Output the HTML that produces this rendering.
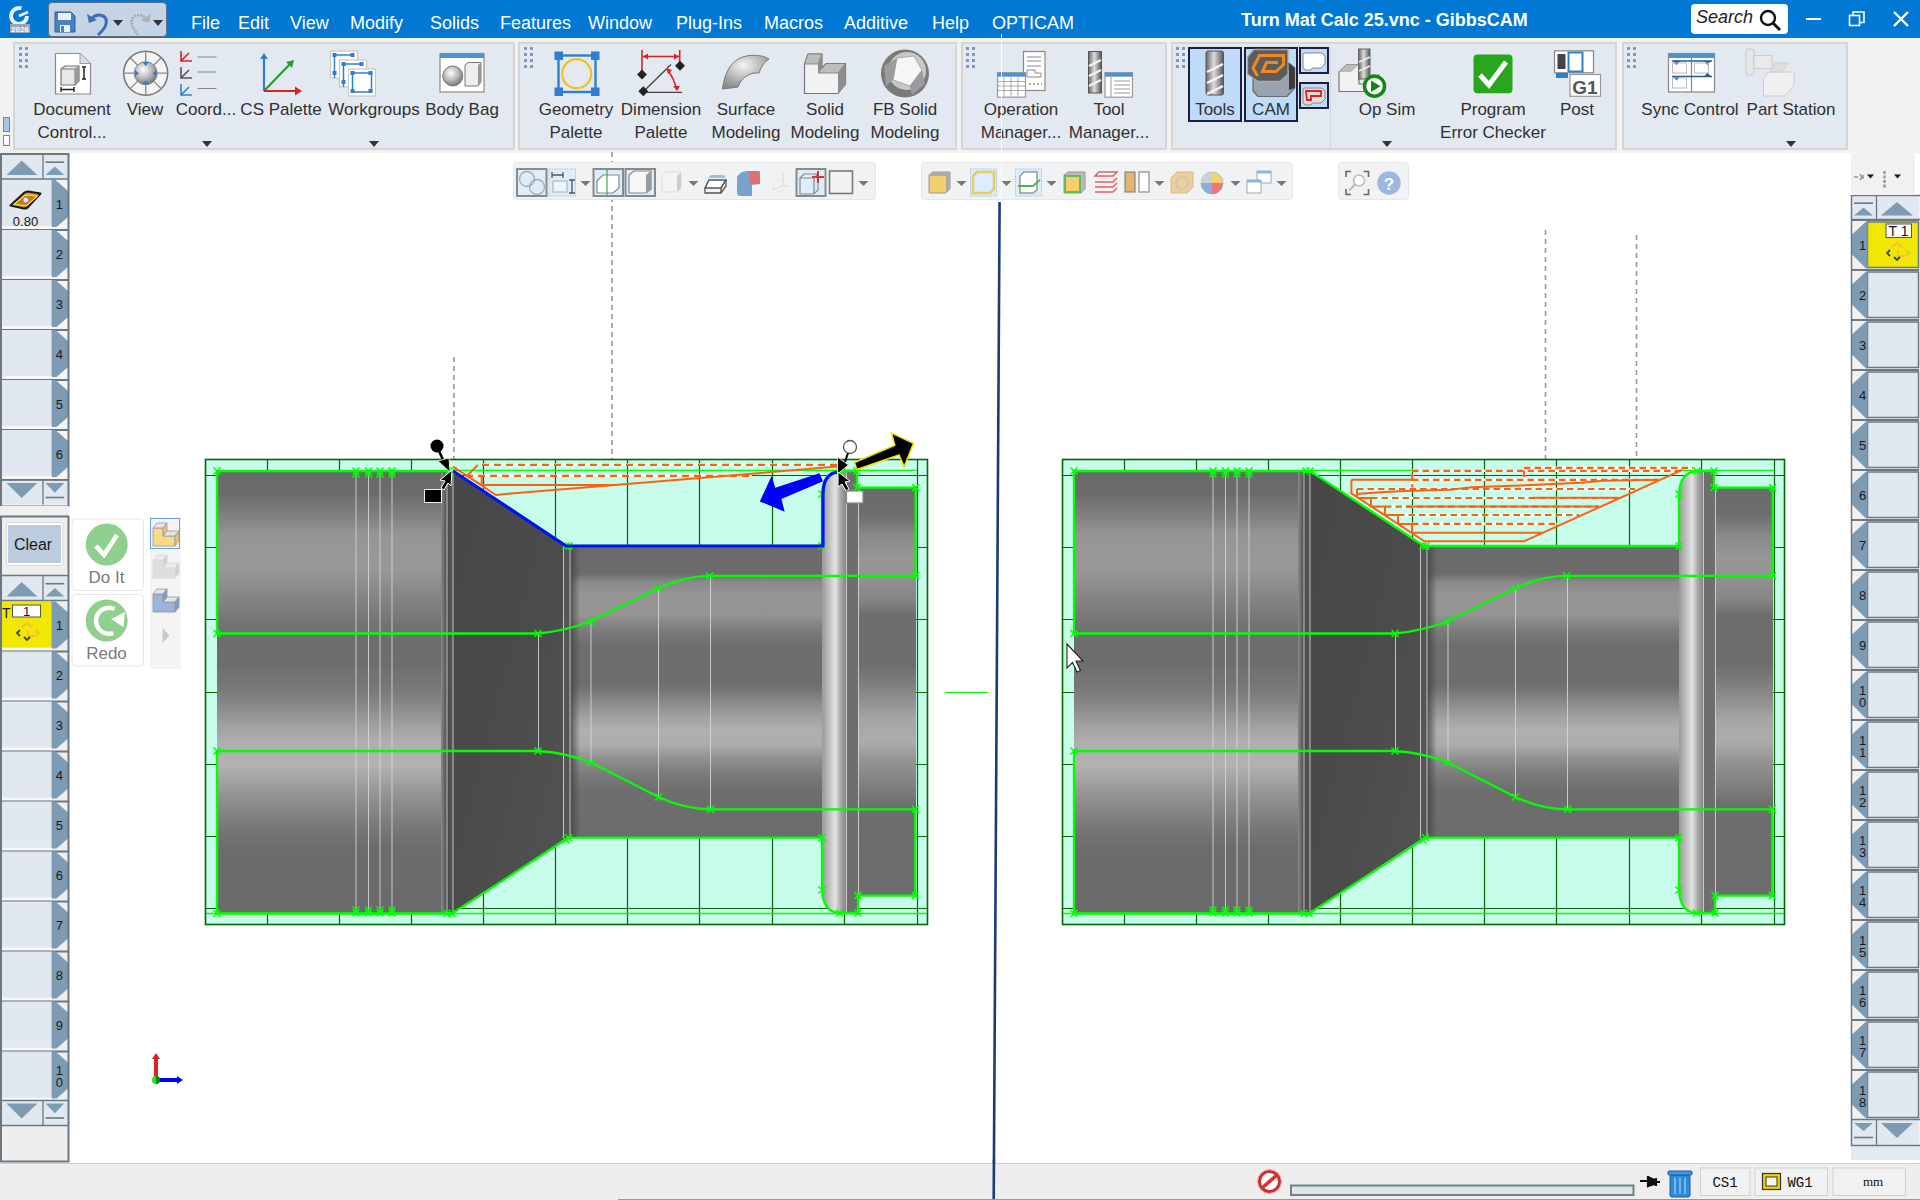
<!DOCTYPE html>
<html><head><meta charset="utf-8">
<style>
*{box-sizing:border-box;margin:0;padding:0}
html,body{width:1920px;height:1200px;overflow:hidden;background:#fff;font-family:"Liberation Sans",sans-serif;position:relative}
.a{position:absolute}
#menubar{left:0;top:0;width:1920px;height:38px;background:#0078d4}
.mi{position:absolute;top:12px;color:#fff;font-size:18px;line-height:22px;white-space:nowrap}
#tbstrip{left:0;top:38px;width:1920px;height:115px;background:#f2f2f3}
.pnl{position:absolute;top:42px;height:108px;background:#e3e9f1;border:2px solid #d5d5d8}
.lbl{position:absolute;font-size:17px;line-height:23px;color:#303030;text-align:center;white-space:nowrap}
.grip{position:absolute;width:3px;height:3px;background:#7f96c6;box-shadow:6px 0 #7f96c6,0 6px #7f96c6,6px 6px #7f96c6,0 12px #7f96c6,6px 12px #7f96c6,0 18px #7f96c6,6px 18px #7f96c6}
.dd{position:absolute;width:0;height:0;border-left:5px solid transparent;border-right:5px solid transparent;border-top:6px solid #333}
#status{left:0;top:1163px;width:1920px;height:37px;background:#efeeee;border-top:1px solid #cfcfcf}
</style></head><body>

<div id="menubar" class="a">
<svg class="a" style="left:6px;top:4px" width="28" height="30" viewBox="0 0 28 30">
<circle cx="13" cy="12" r="8" fill="none" stroke="#e8f2ff" stroke-width="4" stroke-dasharray="40 10"/>
<path d="M13 12 L22 8" stroke="#e8f2ff" stroke-width="3"/>
<rect x="4" y="20" width="20" height="9" fill="#9aa6b4"/>
<text x="14" y="28" font-size="8" font-weight="bold" fill="#fff" text-anchor="middle" font-family="Liberation Sans">2026</text>
</svg>
<div class="a" style="left:48px;top:2px;width:119px;height:35px;background:#c5d3e6;border:1.5px solid #5e6e84;border-radius:4px"></div>
<svg class="a" style="left:54px;top:11px" width="22" height="22" viewBox="0 0 22 22">
<path d="M1 1 H17 L21 5 V21 H1 Z" fill="#4a7fc0" stroke="#2f5f9f" stroke-width="1"/>
<rect x="4" y="2" width="13" height="7" fill="#e8f0fa"/>
<rect x="6" y="14" width="10" height="7" fill="#e8f0fa"/>
<rect x="7" y="15" width="3" height="6" fill="#4a7fc0"/>
</svg>
<svg class="a" style="left:86px;top:10px" width="26" height="26" viewBox="0 0 26 26">
<path d="M5 9 C12 2 22 5 20 14 C19 19 15 22 12 25" fill="none" stroke="#3d6fb0" stroke-width="3"/>
<path d="M1 4 L3 13 L11 10 Z" fill="#3d6fb0"/>
</svg>
<div class="dd" style="left:113px;top:20px;border-top-color:#333"></div>
<svg class="a" style="left:128px;top:10px" width="24" height="26" viewBox="0 0 24 26">
<path d="M19 9 C12 2 2 5 4 14 C5 19 8 22 10 25" fill="none" stroke="#a8a8a8" stroke-width="2.5" stroke-dasharray="2 1"/>
<path d="M23 4 L21 13 L13 10 Z" fill="#b0b0b0"/>
</svg>
<div class="dd" style="left:153px;top:20px;border-top-color:#333"></div>
<span class="mi" style="left:191px">File</span>
<span class="mi" style="left:238px">Edit</span>
<span class="mi" style="left:290px">View</span>
<span class="mi" style="left:350px">Modify</span>
<span class="mi" style="left:430px">Solids</span>
<span class="mi" style="left:500px">Features</span>
<span class="mi" style="left:588px">Window</span>
<span class="mi" style="left:676px">Plug-Ins</span>
<span class="mi" style="left:764px">Macros</span>
<span class="mi" style="left:844px">Additive</span>
<span class="mi" style="left:932px">Help</span>
<span class="mi" style="left:992px">OPTICAM</span>
<span class="mi" style="left:1241px;top:9px;font-weight:bold">Turn Mat Calc 25.vnc - GibbsCAM</span>
<div class="a" style="left:1691px;top:4px;width:97px;height:30px;background:#fff;border-radius:4px"></div>
<span class="a" style="left:1696px;top:7px;font-size:18px;font-style:italic;color:#222">Search</span>
<svg class="a" style="left:1758px;top:8px" width="24" height="24" viewBox="0 0 24 24"><circle cx="10" cy="10" r="7" fill="none" stroke="#111" stroke-width="2.4"/><path d="M15 15 L22 22" stroke="#111" stroke-width="3"/></svg>
<div class="a" style="left:1806px;top:18px;width:15px;height:2px;background:#fff"></div>
<svg class="a" style="left:1848px;top:10px" width="18" height="18" viewBox="0 0 18 18"><rect x="1.5" y="5.5" width="10" height="10" fill="none" stroke="#fff" stroke-width="1.6"/><path d="M5 5.5 V2 H16 V12.5 H11.5" fill="none" stroke="#fff" stroke-width="1.6"/></svg>
<svg class="a" style="left:1892px;top:10px" width="18" height="18" viewBox="0 0 18 18"><path d="M2 2 L16 16 M16 2 L2 16" stroke="#fff" stroke-width="2.4"/></svg>
</div>
<div id="tbstrip" class="a">
<div class="a" style="left:3px;top:79px;width:7px;height:15px;background:#a9c4e8;border:1px solid #5a8ad0"></div>
<div class="a" style="left:3px;top:97px;width:7px;height:11px;background:#fff;border:1px solid #5a8ad0"></div>
</div>
<div class="pnl" style="left:13px;width:502px"></div>
<div class="pnl" style="left:518px;width:439px"></div>
<div class="pnl" style="left:961px;width:206px"></div>
<div class="pnl" style="left:1171px;width:446px"></div>
<div class="pnl" style="left:1622px;width:226px"></div>
<div class="grip" style="left:19px;top:47px"></div>
<div class="grip" style="left:524px;top:47px"></div>
<div class="grip" style="left:966px;top:47px"></div>
<div class="grip" style="left:1176px;top:47px"></div>
<div class="grip" style="left:1627px;top:47px"></div>
<div class="a" style="left:1330px;top:47px;width:1px;height:101px;background:#d0d7df"></div>
<!-- labels -->
<div class="lbl" style="left:22px;top:98px;width:100px">Document<br>Control...</div>
<div class="lbl" style="left:120px;top:98px;width:50px">View</div>
<div class="lbl" style="left:171px;top:98px;width:70px">Coord...</div>
<div class="lbl" style="left:236px;top:98px;width:90px">CS Palette</div>
<div class="lbl" style="left:324px;top:98px;width:100px">Workgroups</div>
<div class="lbl" style="left:417px;top:98px;width:90px">Body Bag</div>
<div class="lbl" style="left:531px;top:98px;width:90px">Geometry<br>Palette</div>
<div class="lbl" style="left:616px;top:98px;width:90px">Dimension<br>Palette</div>
<div class="lbl" style="left:701px;top:98px;width:90px">Surface<br>Modeling</div>
<div class="lbl" style="left:780px;top:98px;width:90px">Solid<br>Modeling</div>
<div class="lbl" style="left:859px;top:98px;width:92px">FB Solid<br>Modeling</div>
<div class="lbl" style="left:971px;top:98px;width:100px">Operation<br>Manager...</div>
<div class="lbl" style="left:1059px;top:98px;width:100px">Tool<br>Manager...</div>
<div class="a" style="left:1188px;top:47px;width:54px;height:75px;background:#c0dbf8;border:2px solid #1c1f44"></div>
<div class="a" style="left:1244px;top:47px;width:54px;height:75px;background:#c0dbf8;border:2px solid #1c1f44"></div>
<div class="a" style="left:1299px;top:47px;width:30px;height:27px;background:#c0dbf8;border:2px solid #1c1f44"></div>
<div class="a" style="left:1299px;top:82px;width:30px;height:27px;background:#c0dbf8;border:2px solid #1c1f44"></div>
<div class="lbl" style="left:1180px;top:98px;width:70px">Tools</div>
<div class="lbl" style="left:1236px;top:98px;width:70px">CAM</div>
<div class="lbl" style="left:1342px;top:98px;width:90px">Op Sim</div>
<div class="lbl" style="left:1437px;top:98px;width:112px">Program<br>Error Checker</div>
<div class="lbl" style="left:1547px;top:98px;width:60px">Post</div>
<div class="lbl" style="left:1635px;top:98px;width:110px">Sync Control</div>
<div class="lbl" style="left:1741px;top:98px;width:100px">Part Station</div>
<div class="dd" style="left:202px;top:141px"></div>
<div class="dd" style="left:369px;top:141px"></div>
<div class="dd" style="left:1382px;top:141px"></div>
<div class="dd" style="left:1786px;top:141px"></div>
<svg class="a" style="left:0;top:0" width="1920" height="160" viewBox="0 0 1920 160">
<defs>
<radialGradient id="gsph" cx="40%" cy="35%" r="65%"><stop offset="0" stop-color="#fff"/><stop offset="0.6" stop-color="#b5b5b5"/><stop offset="1" stop-color="#777"/></radialGradient>
<linearGradient id="gmill" x1="0" x2="1"><stop offset="0" stop-color="#666"/><stop offset="0.45" stop-color="#ddd"/><stop offset="1" stop-color="#555"/></linearGradient>
<radialGradient id="gsurf" cx="45%" cy="30%" r="70%"><stop offset="0" stop-color="#f4f4f4"/><stop offset="1" stop-color="#8a8a8a"/></radialGradient>
</defs>
<!-- Document Control -->
<path d="M55.5 53.5 H80 L90.5 63.5 V94 H55.5 Z" fill="#fff" stroke="#8a8a8a" stroke-width="1.2"/>
<path d="M80 53.5 V63.5 H90.5" fill="#e0e0e0" stroke="#9a9a9a" stroke-width="1"/>
<path d="M61 69 L65 66 H79 V81 L75 85 H61 Z" fill="#e8e8e8" stroke="#777" stroke-width="1.2"/>
<path d="M75 69 V85 M61 69 H75 L79 66" fill="none" stroke="#777" stroke-width="1"/>
<path d="M75 69 L79 66 V81 L75 85 Z" fill="#9a9a9a"/>
<path d="M84 67 V79 M82 67 H86 M82 79 H86" stroke="#222" stroke-width="1.5"/>
<path d="M61 89.5 H74 M61 87 V92 M74 87 V92" stroke="#222" stroke-width="1.4"/>
<!-- View -->
<circle cx="145.7" cy="73.2" r="22" fill="#f4f4f4" stroke="#777" stroke-width="1.5"/>
<path d="M145.7 51 V95.4 M123.5 73.2 H167.9 M130 57.5 L161.4 88.9 M161.4 57.5 L130 88.9" stroke="#888" stroke-width="1.3"/>
<circle cx="145.7" cy="73.2" r="11.5" fill="url(#gsph)" stroke="#888" stroke-width="1"/>
<path d="M142.5 62 H149 L145.7 66 Z M142.5 84.5 H149 L145.7 80.5 Z M135 70 V76.5 L139 73.2 Z M156.5 70 V76.5 L152.5 73.2 Z" fill="#2f7fd0"/>
<!-- Coord -->
<g stroke-width="1.6" fill="none">
<path d="M181 51 V61 H192 M181 61 L189 53" stroke="#dd2222"/>
<path d="M181 67 V78 H192 M181 78 L189 70" stroke="#555"/>
<path d="M181 84 V95 H192 M181 95 L189 87" stroke="#2f7fd0"/>
</g>
<path d="M197.5 57 H216.5 M197.5 72 H216.5 M197.5 88.5 H216.5" stroke="#888" stroke-width="1.2"/>
<!-- CS Palette -->
<path d="M264 91 V57" stroke="#2f7fd0" stroke-width="2.2"/><path d="M260 59 L264 53 L268 59 Z" fill="#2f7fd0"/>
<path d="M264 91 L291 63" stroke="#22a022" stroke-width="2.2"/><path d="M286 62 L294 60 L292 68 Z" fill="#22a022"/>
<path d="M264 91 H297" stroke="#dd2222" stroke-width="2.2"/><path d="M295 86.5 L302 91 L295 95.5 Z" fill="#dd2222"/>
<!-- Workgroups -->
<g fill="#fff" stroke="#c8c8c8" stroke-width="1.2">
<rect x="330.5" y="51" width="27" height="27"/><rect x="339.5" y="60" width="27" height="27"/><rect x="348.5" y="69" width="27" height="27"/>
</g>
<g fill="none" stroke="#2f7fd0" stroke-width="1.5">
<path d="M334.5 78 V55 H352.5"/><path d="M343.5 87 V64 H361.5"/><rect x="352.5" y="73" width="19" height="19"/>
</g>
<g fill="#2f7fd0">
<rect x="332.5" y="53" width="4" height="4"/><rect x="350.5" y="53" width="4" height="4"/><rect x="332.5" y="71" width="4" height="4"/>
<rect x="341.5" y="62" width="4" height="4"/><rect x="359.5" y="62" width="4" height="4"/><rect x="341.5" y="80" width="4" height="4"/>
<rect x="350.5" y="71" width="4" height="4"/><rect x="368.5" y="71" width="4" height="4"/><rect x="350.5" y="89" width="4" height="4"/><rect x="368.5" y="89" width="4" height="4"/>
</g>
<!-- Body Bag -->
<rect x="440" y="53.5" width="44" height="38.5" fill="#fff" stroke="#8a8a8a" stroke-width="1.2"/>
<rect x="440" y="53.5" width="44" height="4.5" fill="#4f92d0"/>
<circle cx="452.8" cy="76" r="10" fill="url(#gsph)" stroke="#777" stroke-width="1"/>
<path d="M465 65 L468 62.5 H481 V82 L478 86 H465 Z" fill="#eee" stroke="#777" stroke-width="1"/>
<path d="M478 65 L481 62.5 V82 L478 86 Z" fill="#999"/>
<!-- Geometry Palette -->
<rect x="558.5" y="55.5" width="37" height="36.5" fill="none" stroke="#2f7fd0" stroke-width="2.4"/>
<rect x="554.5" y="51.5" width="8.5" height="8.5" fill="#2f7fd0"/><rect x="591" y="51.5" width="8.5" height="8.5" fill="#2f7fd0"/>
<rect x="554.5" y="87.5" width="8.5" height="8.5" fill="#2f7fd0"/><rect x="591" y="87.5" width="8.5" height="8.5" fill="#2f7fd0"/>
<circle cx="576.7" cy="73.7" r="14.5" fill="none" stroke="#f0c020" stroke-width="2.2"/>
<!-- Dimension Palette -->
<path d="M642 50 V71 M679.7 50 V62 M643 56.5 H679" stroke="#dd2222" stroke-width="1.6"/>
<path d="M643 56.5 L648 53.5 V59.5 Z M679 56.5 L674 53.5 V59.5 Z" fill="#dd2222"/>
<path d="M644 91 L671 64.5 M643 92.3 H682" stroke="#444" stroke-width="1.3"/>
<path d="M668.5 71 Q674 79 676.7 89" fill="none" stroke="#dd2222" stroke-width="1.4"/>
<path d="M666 68 L672 70 L668 74 Z M673 86 L680 86 L677 91 Z" fill="#dd2222"/>
<g fill="#222"><rect x="638.5" y="71" width="7" height="7" transform="rotate(45 642 74.5)"/><rect x="676.5" y="62.2" width="7" height="7" transform="rotate(45 680 65.7)"/><rect x="639.8" y="87.7" width="7" height="7" transform="rotate(45 643.3 91.2)"/></g>
<!-- Surface -->
<path d="M722.5 89 C725 70 733 57 750 55.5 C758 55 765 56 769 59 C764 62 761 67 759 73 C752 72 742 76 738 87 Z" fill="url(#gsurf)" stroke="#777" stroke-width="1"/>
<!-- Solid -->
<path d="M804.5 64 L808 54 H822 V68 L826 63.5 H845.5 V84 L838 93.5 H804.5 Z" fill="#f2f2f2" stroke="#777" stroke-width="1.2"/>
<path d="M808 54 H822 L818 64 H804.5 Z M826 63.5 H845.5 L838 73 H818 Z" fill="#bdbdbd" stroke="#777" stroke-width="0.8"/>
<path d="M822 54 V68 L818 73 V64 Z M845.5 63.5 V84 L838 93.5 V73 Z" fill="#8e8e8e"/>
<!-- FB Solid -->
<circle cx="905" cy="73.5" r="24" fill="#7a7a7a"/>
<circle cx="907" cy="71" r="19" fill="#c8c8c8"/>
<path d="M897 58 L914 56 L922 70 L910 86 L893 80 Z" fill="#f6f6f6" stroke="#999" stroke-width="0.8"/>
<path d="M884 66 L897 58 L893 80 L886 86 Z M910 86 L922 70 L925 84 L912 95 Z" fill="#9c9c9c"/>
<!-- Operation Manager -->
<rect x="1023.5" y="51.5" width="21.5" height="39" fill="#fff" stroke="#8a8a8a" stroke-width="1.2"/>
<path d="M1027 57 H1041 M1027 61 H1041 M1027 66 H1041" stroke="#888" stroke-width="1"/>
<path d="M1027 70 H1035 V73 H1041 V77 H1027 Z" fill="none" stroke="#888" stroke-width="1"/>
<path d="M1029 84 H1042" stroke="#888" stroke-width="1.5" stroke-dasharray="2 2"/>
<rect x="997.5" y="72.7" width="28" height="24.5" fill="#fff" stroke="#999" stroke-width="1.2"/>
<rect x="997.5" y="72.7" width="28" height="4" fill="#4f92d0"/>
<path d="M997.5 81.5 H1025.5 M997.5 86 H1025.5 M997.5 90.5 H1025.5 M1004 77 V97 M1011 77 V97 M1018 77 V97" stroke="#aaa" stroke-width="1"/>
<!-- Tool Manager -->
<rect x="1088.5" y="51.5" width="13" height="41.5" fill="url(#gmill)" stroke="#555" stroke-width="1"/>
<path d="M1089 66 L1101 60 M1089 76 L1101 70 M1089 86 L1101 80" stroke="#f4f4f4" stroke-width="2"/>
<rect x="1105" y="72.7" width="27.5" height="24.5" fill="#fff" stroke="#999" stroke-width="1.2"/>
<rect x="1105" y="72.7" width="27.5" height="4" fill="#4f92d0"/>
<path d="M1111 77 V97 M1114 81 H1130 M1114 85 H1130 M1114 89 H1130 M1114 93 H1130" stroke="#999" stroke-width="1"/>
<!-- Tools -->
<rect x="1206" y="51" width="17.5" height="44" rx="2" fill="url(#gmill)" stroke="#555" stroke-width="1"/>
<path d="M1207 72 L1223 64 M1207 83 L1223 75 M1207 94 L1223 86" stroke="#f4f4f4" stroke-width="2.5"/>
<!-- CAM -->
<path d="M1258 96.5 L1253 91 V71 L1262 63 H1289 L1294.7 68 V88 L1287 96.5 Z" fill="#98a4b0" stroke="#6a6a6a" stroke-width="1.2"/>
<path d="M1262 63 H1289 L1294.7 68 V88 L1289 90 V70 Z" fill="#3a3a3a"/>
<path d="M1254 49.5 H1288 V74 L1280 81.5 H1258 L1247.5 74 V57 Z" fill="#5c5c5c" stroke="#a8a8a8" stroke-width="1.3"/>
<path d="M1257.5 76 L1253 68 L1259.5 55.5 H1283.5 V64.5 L1276 71.5 H1262.5 L1266.5 62.5 H1278" fill="none" stroke="#f08a20" stroke-width="3"/>
<!-- small buttons -->
<path d="M1304 53 H1322 L1325 56 V64 L1321 68 H1313 L1310 70 H1305 L1303 67 V55 Z" fill="#fff" stroke="#888" stroke-width="1"/>
<path d="M1304 88 H1322 L1325 91 V99 L1321 103 H1313 L1310 105 H1305 L1303 102 V90 Z" fill="#ddd" stroke="#888" stroke-width="1"/>
<path d="M1306 91 H1321 V96 H1311 V100 H1307 Z" fill="none" stroke="#e02020" stroke-width="1.8"/>
<!-- Op Sim -->
<path d="M1339 91.5 V72 L1347 64.5 H1359 V84 H1380 V91.5 Z" fill="#f2f2f2" stroke="#777" stroke-width="1.2"/>
<path d="M1339 72 L1347 64.5 H1359 L1351 72 Z M1370 74 H1380 V84 H1370 Z" fill="#bbb"/>
<rect x="1358.5" y="49" width="11.5" height="30" fill="url(#gmill)" stroke="#666" stroke-width="1"/>
<path d="M1359 62 L1370 57 M1359 71 L1370 66" stroke="#eee" stroke-width="1.8"/>
<circle cx="1374.5" cy="86.2" r="10" fill="#fff" stroke="#118811" stroke-width="3.5"/>
<path d="M1371 80.5 L1380.5 86.2 L1371 92 Z" fill="#118811"/>
<!-- Program Error Checker -->
<rect x="1473.5" y="54.5" width="39" height="38.7" rx="4" fill="#2aa61e"/>
<path d="M1480 75 L1489 85 L1506 62" fill="none" stroke="#fff" stroke-width="5"/>
<!-- Post -->
<rect x="1554.5" y="50.8" width="39" height="22" fill="#fff" stroke="#888" stroke-width="1.2"/>
<rect x="1557.5" y="54" width="8" height="15" fill="#444"/>
<rect x="1568.5" y="52.5" width="14" height="19" fill="#fff" stroke="#2f7fd0" stroke-width="2"/>
<rect x="1556" y="73" width="12" height="5" fill="#2f7fd0"/>
<rect x="1570" y="74.5" width="30.5" height="21.8" fill="#fff" stroke="#999" stroke-width="1.2"/>
<text x="1585" y="93.5" font-family="Liberation Sans" font-weight="bold" font-size="19" fill="#555" text-anchor="middle">G1</text>
<!-- Sync Control -->
<rect x="1668.5" y="53.5" width="46" height="38.5" fill="#fff" stroke="#888" stroke-width="1.2"/>
<rect x="1668.5" y="53.5" width="46" height="4.5" fill="#4f92d0"/>
<path d="M1691.5 58 V92" stroke="#888" stroke-width="1.2"/>
<path d="M1672 61 H1712 M1672 76.5 H1712" stroke="#2a5a9a" stroke-width="1.6"/>
<path d="M1673 61 H1680 L1676.5 65 Z M1704 61 H1711 L1707.5 65 Z M1673 76.5 H1680 L1676.5 80.5 Z M1704 76.5 H1711 L1707.5 72.5 Z" fill="#2a5a9a"/>
<rect x="1672.5" y="63" width="14" height="10" fill="none" stroke="#bbb" stroke-width="1"/>
<rect x="1672.5" y="78" width="14" height="10" fill="none" stroke="#bbb" stroke-width="1"/>
<rect x="1694.5" y="63" width="14" height="10" fill="none" stroke="#bbb" stroke-width="1"/>
<!-- Part Station -->
<rect x="1746" y="49" width="8" height="26" rx="2" fill="#e6e6e6" stroke="#c8c8c8" stroke-width="1"/>
<rect x="1754" y="55.5" width="18" height="13" fill="#eaeaea" stroke="#ccc" stroke-width="1"/>
<path d="M1763.5 96 V78 L1769 72 H1794 V85 L1785 96 Z" fill="#f0f0f0" stroke="#ccc" stroke-width="1"/>
<path d="M1769 72 L1775 63 H1788 L1782 72 Z" fill="#ddd" stroke="#ccc" stroke-width="0.8"/>
</svg>


<!--VIEW-->
<svg class="a" style="left:0;top:0" width="1920" height="1200" viewBox="0 0 1920 1200">
<defs>

<linearGradient id="cylA" gradientUnits="userSpaceOnUse" x1="0" y1="471" x2="0" y2="913">
<stop offset="0.000" stop-color="#686868"/><stop offset="0.052" stop-color="#6c6c6c"/><stop offset="0.100" stop-color="#808080"/><stop offset="0.145" stop-color="#979595"/><stop offset="0.224" stop-color="#999797"/><stop offset="0.281" stop-color="#868686"/><stop offset="0.348" stop-color="#737373"/><stop offset="0.394" stop-color="#6c6c6c"/><stop offset="0.439" stop-color="#6e6e6e"/><stop offset="0.495" stop-color="#797979"/><stop offset="0.541" stop-color="#8e8e8e"/><stop offset="0.581" stop-color="#a2a2a2"/><stop offset="0.620" stop-color="#b0b0b0"/><stop offset="0.665" stop-color="#b2b2b2"/><stop offset="0.713" stop-color="#9c9c9c"/><stop offset="0.756" stop-color="#8a8a8a"/><stop offset="0.812" stop-color="#767676"/><stop offset="0.857" stop-color="#6c6c6c"/><stop offset="1.000" stop-color="#6a6a6a"/>
</linearGradient>
<linearGradient id="cylB" gradientUnits="userSpaceOnUse" x1="0" y1="546" x2="0" y2="838">
<stop offset="0.000" stop-color="#6a6a6a"/><stop offset="0.096" stop-color="#6c6c6c"/><stop offset="0.123" stop-color="#8a8a8a"/><stop offset="0.168" stop-color="#979595"/><stop offset="0.236" stop-color="#959393"/><stop offset="0.288" stop-color="#7c7c7c"/><stop offset="0.339" stop-color="#6e6e6e"/><stop offset="0.476" stop-color="#6e6e6e"/><stop offset="0.527" stop-color="#868686"/><stop offset="0.589" stop-color="#a2a2a2"/><stop offset="0.630" stop-color="#b0b0b0"/><stop offset="0.682" stop-color="#acacac"/><stop offset="0.733" stop-color="#8e8e8e"/><stop offset="0.784" stop-color="#7a7a7a"/><stop offset="0.836" stop-color="#6e6e6e"/><stop offset="1.000" stop-color="#6c6c6c"/>
</linearGradient>
<linearGradient id="cylC" gradientUnits="userSpaceOnUse" x1="0" y1="488" x2="0" y2="896">
<stop offset="0.000" stop-color="#6a6a6a"/><stop offset="0.066" stop-color="#6e6e6e"/><stop offset="0.115" stop-color="#888888"/><stop offset="0.176" stop-color="#979797"/><stop offset="0.213" stop-color="#939393"/><stop offset="0.275" stop-color="#848484"/><stop offset="0.311" stop-color="#6e6e6e"/><stop offset="0.434" stop-color="#6e6e6e"/><stop offset="0.495" stop-color="#848484"/><stop offset="0.564" stop-color="#a4a4a4"/><stop offset="0.618" stop-color="#adadad"/><stop offset="0.667" stop-color="#949494"/><stop offset="0.735" stop-color="#7e7e7e"/><stop offset="0.777" stop-color="#6e6e6e"/><stop offset="1.000" stop-color="#6c6c6c"/>
</linearGradient>
<linearGradient id="cone" x1="0" y1="0" x2="1" y2="1">
<stop offset="0" stop-color="#474747"/><stop offset="0.5" stop-color="#4b4b4b"/><stop offset="1" stop-color="#535353"/>
</linearGradient>
<linearGradient id="coneEdge" x1="0" y1="0" x2="1" y2="0">
<stop offset="0" stop-color="#8a8a8a"/><stop offset="0.5" stop-color="#4a4a4a"/><stop offset="1" stop-color="#555"/>
</linearGradient>
<linearGradient id="midEdge" x1="0" y1="0" x2="1" y2="0">
<stop offset="0" stop-color="#404040" stop-opacity="0.8"/><stop offset="1" stop-color="#404040" stop-opacity="0"/>
</linearGradient>
<linearGradient id="ring" x1="0" y1="0" x2="1" y2="0">
<stop offset="0" stop-color="#9a9a9a"/><stop offset="0.3" stop-color="#c0c0c0"/><stop offset="0.55" stop-color="#e4e4e4"/><stop offset="0.78" stop-color="#a8a8a8"/><stop offset="1" stop-color="#858585"/>
</linearGradient>

</defs>
<path d="M453.9 357 V471 M612 152 V471 M1545.5 230 V460 M1636.5 235 V460" stroke="#9a9a9a" stroke-width="1.6" stroke-dasharray="5 4"/>
<rect x="205.5" y="459.5" width="722" height="465" fill="#c8fdec" stroke="#006800" stroke-width="1.6"/>
<path d="M267.5 460 V924 M339.5 460 V924 M411.5 460 V924 M483.5 460 V924 M555.5 460 V924 M627.5 460 V924 M699.5 460 V924 M772.5 460 V924 M844.5 460 V924 M206 475.5 H927 M206 547.5 H927 M206 619.5 H927 M206 692.5 H927 M206 764.5 H927 M206 836.5 H927 M206 908.5 H927 M917.5 460 V924" stroke="#006800" stroke-width="1.2" fill="none"/>
<rect x="217" y="471" width="230" height="442" fill="url(#cylA)"/>
<path d="M441 471 H453 V913 H441 Z" fill="url(#coneEdge)"/>
<path d="M453 471 L566 546 V838 L453 913 Z" fill="url(#cone)"/>
<rect x="570" y="546" width="252" height="292" fill="url(#cylB)"/>
<rect x="563.5" y="546" width="6.5" height="292" fill="#555"/>
<rect x="570" y="546" width="10" height="292" fill="url(#midEdge)"/>
<path d="M822 494 Q823 472 840 471 H846 V913 H840 Q823 912 822 890 Z" fill="url(#ring)"/>
<rect x="846" y="471" width="12" height="442" fill="#6e6e6e"/>
<rect x="858" y="488" width="58" height="408" fill="url(#cylC)"/>
<path d="M356 474 V911 M368.5 474 V911 M380 474 V911 M392 474 V911 M447 471 V913 M453 471 V913 M538.5 633.5 V751 M563.5 546 V838 M570 546 V838 M591 621.5 V762.5 M658.5 588.5 V797 M710.5 576 V809.3 M846.5 471 V913 M858.5 488 V896" stroke="#d8d8d8" stroke-width="1" fill="none" opacity="0.85"/>
<path d="M217 633.5 V471 H453 L567 546 H822 V494 Q823 472 840 471 H857 V487.6 H915.7 V575.8 H709.5 Q684 576 658 588.5 L590 621.5 Q565 631 538 633.5 Z M217 751 H538 Q565 752.5 591 762.5 L658.5 797 Q684 809 710.5 809.3 H915.3 V895.6 H858 V913 H839.5 Q823 912 822 890 V837.7 H568.5 L452 913.5 H217 Z" stroke="#00ff00" stroke-width="2.3" fill="none" stroke-linejoin="round"/>
<path d="M453 470.3 H917" stroke="#00ff00" stroke-width="1.3"/>
<path d="M206 913.5 H927" stroke="#00ff00" stroke-width="1.3"/>
<path d="M213.5 467.5 L220.5 474.5 M220.5 467.5 L213.5 474.5 M213.5 630.0 L220.5 637.0 M220.5 630.0 L213.5 637.0 M213.5 747.5 L220.5 754.5 M220.5 747.5 L213.5 754.5 M213.5 910.0 L220.5 917.0 M220.5 910.0 L213.5 917.0 M352.5 467.5 L359.5 474.5 M359.5 467.5 L352.5 474.5 M365.0 467.5 L372.0 474.5 M372.0 467.5 L365.0 474.5 M376.5 467.5 L383.5 474.5 M383.5 467.5 L376.5 474.5 M388.5 467.5 L395.5 474.5 M395.5 467.5 L388.5 474.5 M352.5 470.5 L359.5 477.5 M359.5 470.5 L352.5 477.5 M365.0 470.5 L372.0 477.5 M372.0 470.5 L365.0 477.5 M376.5 470.5 L383.5 477.5 M383.5 470.5 L376.5 477.5 M388.5 470.5 L395.5 477.5 M395.5 470.5 L388.5 477.5 M445.5 467.5 L452.5 474.5 M452.5 467.5 L445.5 474.5 M449.5 467.5 L456.5 474.5 M456.5 467.5 L449.5 474.5 M562.5 542.5 L569.5 549.5 M569.5 542.5 L562.5 549.5 M565.5 542.5 L572.5 549.5 M572.5 542.5 L565.5 549.5 M818.5 542.5 L825.5 549.5 M825.5 542.5 L818.5 549.5 M818.5 490.5 L825.5 497.5 M825.5 490.5 L818.5 497.5 M836.5 467.5 L843.5 474.5 M843.5 467.5 L836.5 474.5 M853.5 467.5 L860.5 474.5 M860.5 467.5 L853.5 474.5 M853.5 484.1 L860.5 491.1 M860.5 484.1 L853.5 491.1 M912.2 484.1 L919.2 491.1 M919.2 484.1 L912.2 491.1 M912.2 572.3 L919.2 579.3 M919.2 572.3 L912.2 579.3 M706.0 572.5 L713.0 579.5 M713.0 572.5 L706.0 579.5 M654.5 585.0 L661.5 592.0 M661.5 585.0 L654.5 592.0 M586.5 618.0 L593.5 625.0 M593.5 618.0 L586.5 625.0 M534.5 630.0 L541.5 637.0 M541.5 630.0 L534.5 637.0 M534.5 747.5 L541.5 754.5 M541.5 747.5 L534.5 754.5 M587.5 759.0 L594.5 766.0 M594.5 759.0 L587.5 766.0 M655.0 793.5 L662.0 800.5 M662.0 793.5 L655.0 800.5 M707.0 805.8 L714.0 812.8 M714.0 805.8 L707.0 812.8 M911.8 805.8 L918.8 812.8 M918.8 805.8 L911.8 812.8 M911.8 892.1 L918.8 899.1 M918.8 892.1 L911.8 899.1 M854.5 892.1 L861.5 899.1 M861.5 892.1 L854.5 899.1 M854.5 909.5 L861.5 916.5 M861.5 909.5 L854.5 916.5 M836.0 909.5 L843.0 916.5 M843.0 909.5 L836.0 916.5 M818.5 886.5 L825.5 893.5 M825.5 886.5 L818.5 893.5 M818.5 834.2 L825.5 841.2 M825.5 834.2 L818.5 841.2 M565.0 834.2 L572.0 841.2 M572.0 834.2 L565.0 841.2 M562.5 836.5 L569.5 843.5 M569.5 836.5 L562.5 843.5 M448.5 910.0 L455.5 917.0 M455.5 910.0 L448.5 917.0 M443.5 910.0 L450.5 917.0 M450.5 910.0 L443.5 917.0 M352.5 909.5 L359.5 916.5 M359.5 909.5 L352.5 916.5 M365.0 909.5 L372.0 916.5 M372.0 909.5 L365.0 916.5 M376.5 909.5 L383.5 916.5 M383.5 909.5 L376.5 916.5 M388.5 909.5 L395.5 916.5 M395.5 909.5 L388.5 916.5 M352.5 906.5 L359.5 913.5 M359.5 906.5 L352.5 913.5 M365.0 906.5 L372.0 913.5 M372.0 906.5 L365.0 913.5 M376.5 906.5 L383.5 913.5 M383.5 906.5 L376.5 913.5 M388.5 906.5 L395.5 913.5 M395.5 906.5 L388.5 913.5" stroke="#00ff00" stroke-width="1.5"/>
<path d="M482 464.8 H838 M466 475.8 H752" stroke="#fff" stroke-width="2.6"/>
<path d="M482 464.8 H838" stroke="#ff6010" stroke-width="2.2" stroke-dasharray="7 5"/>
<path d="M466 475.8 H752" stroke="#ff6010" stroke-width="2.2" stroke-dasharray="7 5"/>
<path d="M453 466.6 L496 495 L508 493.7 L837.6 466.6 M477.7 465 L467 476 L481.7 485 H618 M481.7 476 V485" stroke="#ff6010" stroke-width="2" fill="none"/>
<path d="M453 471 L566 546 H823 V494.6 Q823 474 837.6 472" stroke="#0010ff" stroke-width="3.2" fill="none" stroke-linejoin="round"/>
<circle cx="437" cy="446" r="6.5" fill="#000"/>
<path d="M439 451 L444 462" stroke="#000" stroke-width="2.5"/>
<path d="M438 461 L450 472 L449 458 Z" fill="#000" stroke="#fff" stroke-width="0.8"/>
<path d="M452 470 L440 480 L445 481 L441 488 L444 490 L448 483 L451 486 Z" fill="#000" stroke="#fff" stroke-width="1"/>
<rect x="424.5" y="489.5" width="17" height="13" fill="#000" stroke="#eee" stroke-width="1"/>
<circle cx="850" cy="447" r="6.5" fill="#fff" stroke="#555" stroke-width="1.3"/>
<path d="M848 453 L845 462" stroke="#000" stroke-width="2"/>
<path d="M837.5 457 L837.5 474 L848.5 465 Z" fill="#000" stroke="#fff" stroke-width="0.8"/>
<path d="M838 472 L850 481 L845 482 L849 489 L846 491 L842 484 L838 487 Z" fill="#000" stroke="#fff" stroke-width="1"/>
<rect x="846.5" y="491" width="16.5" height="12" fill="#fff" stroke="#888" stroke-width="1.2"/>
<path d="M854.5 462.5 L894.8 445.2 L891.5 433 L913.5 443.3 L904.2 466.7 L899 455 L856.8 469.5 Z" fill="#000" stroke="#f0e000" stroke-width="1.5" stroke-linejoin="miter"/>
<path d="M819.4 473.3 L775.3 487.8 L771.6 476 L759.8 501.4 L784.7 511.7 L781.4 499 L823.1 481.2 Z" fill="#0000ff"/>
<rect x="1062.5" y="459.5" width="722" height="465" fill="#c8fdec" stroke="#006800" stroke-width="1.6"/>
<path d="M1124.5 460 V924 M1196.5 460 V924 M1268.5 460 V924 M1340.5 460 V924 M1412.5 460 V924 M1484.5 460 V924 M1556.5 460 V924 M1629.5 460 V924 M1701.5 460 V924 M1063 475.5 H1784 M1063 547.5 H1784 M1063 619.5 H1784 M1063 692.5 H1784 M1063 764.5 H1784 M1063 836.5 H1784 M1063 908.5 H1784 M1774.5 460 V924" stroke="#006800" stroke-width="1.2" fill="none"/>
<rect x="1074" y="471" width="230" height="442" fill="url(#cylA)"/>
<path d="M1298 471 H1310 V913 H1298 Z" fill="url(#coneEdge)"/>
<path d="M1310 471 L1423 546 V838 L1310 913 Z" fill="url(#cone)"/>
<rect x="1427" y="546" width="252" height="292" fill="url(#cylB)"/>
<rect x="1420.5" y="546" width="6.5" height="292" fill="#555"/>
<rect x="1427" y="546" width="10" height="292" fill="url(#midEdge)"/>
<path d="M1679 494 Q1680 472 1697 471 H1703 V913 H1697 Q1680 912 1679 890 Z" fill="url(#ring)"/>
<rect x="1703" y="471" width="12" height="442" fill="#6e6e6e"/>
<rect x="1715" y="488" width="58" height="408" fill="url(#cylC)"/>
<path d="M1213 474 V911 M1225.5 474 V911 M1237 474 V911 M1249 474 V911 M1304 471 V913 M1310 471 V913 M1395.5 633.5 V751 M1420.5 546 V838 M1427 546 V838 M1448 621.5 V762.5 M1515.5 588.5 V797 M1567.5 576 V809.3 M1703.5 471 V913 M1715.5 488 V896" stroke="#d8d8d8" stroke-width="1" fill="none" opacity="0.85"/>
<path d="M1074 633.5 V471 H1310 L1424 546 H1679 V494 Q1680 472 1697 471 H1714 V487.6 H1772.7 V575.8 H1566.5 Q1541 576 1515 588.5 L1447 621.5 Q1422 631 1395 633.5 Z M1074 751 H1395 Q1422 752.5 1448 762.5 L1515.5 797 Q1541 809 1567.5 809.3 H1772.3 V895.6 H1715 V913 H1696.5 Q1680 912 1679 890 V837.7 H1425.5 L1309 913.5 H1074 Z" stroke="#00ff00" stroke-width="2.3" fill="none" stroke-linejoin="round"/>
<path d="M1310 470.3 H1774" stroke="#00ff00" stroke-width="1.3"/>
<path d="M1063 913.5 H1784" stroke="#00ff00" stroke-width="1.3"/>
<path d="M1070.5 467.5 L1077.5 474.5 M1077.5 467.5 L1070.5 474.5 M1070.5 630.0 L1077.5 637.0 M1077.5 630.0 L1070.5 637.0 M1070.5 747.5 L1077.5 754.5 M1077.5 747.5 L1070.5 754.5 M1070.5 910.0 L1077.5 917.0 M1077.5 910.0 L1070.5 917.0 M1209.5 467.5 L1216.5 474.5 M1216.5 467.5 L1209.5 474.5 M1222.0 467.5 L1229.0 474.5 M1229.0 467.5 L1222.0 474.5 M1233.5 467.5 L1240.5 474.5 M1240.5 467.5 L1233.5 474.5 M1245.5 467.5 L1252.5 474.5 M1252.5 467.5 L1245.5 474.5 M1209.5 470.5 L1216.5 477.5 M1216.5 470.5 L1209.5 477.5 M1222.0 470.5 L1229.0 477.5 M1229.0 470.5 L1222.0 477.5 M1233.5 470.5 L1240.5 477.5 M1240.5 470.5 L1233.5 477.5 M1245.5 470.5 L1252.5 477.5 M1252.5 470.5 L1245.5 477.5 M1302.5 467.5 L1309.5 474.5 M1309.5 467.5 L1302.5 474.5 M1306.5 467.5 L1313.5 474.5 M1313.5 467.5 L1306.5 474.5 M1419.5 542.5 L1426.5 549.5 M1426.5 542.5 L1419.5 549.5 M1422.5 542.5 L1429.5 549.5 M1429.5 542.5 L1422.5 549.5 M1675.5 542.5 L1682.5 549.5 M1682.5 542.5 L1675.5 549.5 M1675.5 490.5 L1682.5 497.5 M1682.5 490.5 L1675.5 497.5 M1693.5 467.5 L1700.5 474.5 M1700.5 467.5 L1693.5 474.5 M1710.5 467.5 L1717.5 474.5 M1717.5 467.5 L1710.5 474.5 M1710.5 484.1 L1717.5 491.1 M1717.5 484.1 L1710.5 491.1 M1769.2 484.1 L1776.2 491.1 M1776.2 484.1 L1769.2 491.1 M1769.2 572.3 L1776.2 579.3 M1776.2 572.3 L1769.2 579.3 M1563.0 572.5 L1570.0 579.5 M1570.0 572.5 L1563.0 579.5 M1511.5 585.0 L1518.5 592.0 M1518.5 585.0 L1511.5 592.0 M1443.5 618.0 L1450.5 625.0 M1450.5 618.0 L1443.5 625.0 M1391.5 630.0 L1398.5 637.0 M1398.5 630.0 L1391.5 637.0 M1391.5 747.5 L1398.5 754.5 M1398.5 747.5 L1391.5 754.5 M1444.5 759.0 L1451.5 766.0 M1451.5 759.0 L1444.5 766.0 M1512.0 793.5 L1519.0 800.5 M1519.0 793.5 L1512.0 800.5 M1564.0 805.8 L1571.0 812.8 M1571.0 805.8 L1564.0 812.8 M1768.8 805.8 L1775.8 812.8 M1775.8 805.8 L1768.8 812.8 M1768.8 892.1 L1775.8 899.1 M1775.8 892.1 L1768.8 899.1 M1711.5 892.1 L1718.5 899.1 M1718.5 892.1 L1711.5 899.1 M1711.5 909.5 L1718.5 916.5 M1718.5 909.5 L1711.5 916.5 M1693.0 909.5 L1700.0 916.5 M1700.0 909.5 L1693.0 916.5 M1675.5 886.5 L1682.5 893.5 M1682.5 886.5 L1675.5 893.5 M1675.5 834.2 L1682.5 841.2 M1682.5 834.2 L1675.5 841.2 M1422.0 834.2 L1429.0 841.2 M1429.0 834.2 L1422.0 841.2 M1419.5 836.5 L1426.5 843.5 M1426.5 836.5 L1419.5 843.5 M1305.5 910.0 L1312.5 917.0 M1312.5 910.0 L1305.5 917.0 M1300.5 910.0 L1307.5 917.0 M1307.5 910.0 L1300.5 917.0 M1209.5 909.5 L1216.5 916.5 M1216.5 909.5 L1209.5 916.5 M1222.0 909.5 L1229.0 916.5 M1229.0 909.5 L1222.0 916.5 M1233.5 909.5 L1240.5 916.5 M1240.5 909.5 L1233.5 916.5 M1245.5 909.5 L1252.5 916.5 M1252.5 909.5 L1245.5 916.5 M1209.5 906.5 L1216.5 913.5 M1216.5 906.5 L1209.5 913.5 M1222.0 906.5 L1229.0 913.5 M1229.0 906.5 L1222.0 913.5 M1233.5 906.5 L1240.5 913.5 M1240.5 906.5 L1233.5 913.5 M1245.5 906.5 L1252.5 913.5 M1252.5 906.5 L1245.5 913.5" stroke="#00ff00" stroke-width="1.5"/>
<path d="M1524 467.9 H1693 M1412 470.8 H1682 M1412 479.8 H1658.5 M1357 489 H1635 M1371 498 H1619 M1385 506.6 H1599 M1398 515 H1579 M1412 523.9 H1556.5 M1412.2 473.7 V487.3 M1524 470.8 V478.7" stroke="#fff" stroke-width="2.6" fill="none"/>
<path d="M1524 467.9 H1693 M1412 470.8 H1682 M1412 479.8 H1658.5 M1357 489 H1635 M1371 498 H1619 M1385 506.6 H1599 M1398 515 H1579 M1412 523.9 H1556.5 M1412.2 473.7 V487.3 M1524 470.8 V478.7" stroke="#ff6010" stroke-width="2.2" stroke-dasharray="6.5 4" fill="none"/>
<path d="M1351.4 479.8 H1412.2 M1351.4 479.8 V493.4 L1424.4 541.25 H1524 L1682.3 469.85 M1357 489 V496.2 M1357 498 H1371 V506.6 H1385 V515 H1398 V523.9 H1412 V532.8 H1543.7 M1531.8 497.8 H1619 M1405.6 506.5 H1599 M1357 494 L1384 492 L1405.6 491 L1449.7 489.7 L1472 487.3 L1520 485.5 L1536.7 484.7 L1558.5 483.7 L1581.3 482.7 L1603 480.7 L1658.5 479.75" stroke="#ff6010" stroke-width="2" fill="none"/>
<path d="M1067 644 V668 L1072.5 662.5 L1077 672 L1080.5 670.5 L1076 661 L1083 661 Z" fill="#fff" stroke="#222" stroke-width="1.1"/>
<path d="M945 692.5 H988" stroke="#00ff00" stroke-width="1.1"/>
<path d="M999.6 202 L993.7 1200" stroke="#1d3b78" stroke-width="2.6"/>
<path d="M156 1080 V1058" stroke="#dd2222" stroke-width="4"/><path d="M152 1059 L156 1053 L160 1059 Z" fill="#dd2222"/>
<path d="M156 1080 H178" stroke="#0000ee" stroke-width="4"/><path d="M177 1076 L183 1080 L177 1084 Z" fill="#0000ee"/>
<circle cx="156" cy="1080" r="4" fill="#10ee10"/><path d="M156 1076 A4 4 0 0 1 156 1084 Z" fill="#0a800a"/>
</svg>
<!--/VIEW-->
<!--VTOOL-->
<svg class="a" style="left:0;top:0" width="1920" height="1200" viewBox="0 0 1920 1200">
<rect x="0" y="153" width="69" height="354" fill="#f4f4f4"/>
<rect x="1.5" y="154.5" width="66.5" height="24" fill="#e2e8f0"/>
<path d="M43.0 154.5 V178.5" stroke="#6b7781" stroke-width="1.3"/>
<path d="M6.5 175.0 L21.7 160.5 L37.4 175.0 Z" fill="#7d9bb3"/>
<path d="M45.5 162.2 H64.2" stroke="#6b7781" stroke-width="1.6"/>
<path d="M45.5 175.0 L54.9 166.5 L64.2 175.0 Z" fill="#7d9bb3"/>
<rect x="1.5" y="180" width="50.5" height="46" fill="#e2e8f0"/><path d="M52.2 180.0 V226.0" stroke="#6b7781" stroke-width="1"/>
<path d="M52.0 180 H55.5 L68.0 191 V217 L56.5 227 H52.0 Z" fill="#7d9bb3"/>
<path d="M1.5 227.5 H52" stroke="#fbfbfb" stroke-width="1.6"/><path d="M1.5 230.0 H68.0" stroke="#6b7781" stroke-width="1.8"/>
<text x="59.3" y="208.5" font-size="13" text-anchor="middle" fill="#1a1a1a" font-family="Liberation Sans">1</text>
<rect x="1.5" y="230" width="50.5" height="46" fill="#e2e8f0"/><path d="M52.2 230.0 V276.0" stroke="#6b7781" stroke-width="1"/>
<path d="M52.0 230 H55.5 L68.0 241 V267 L56.5 277 H52.0 Z" fill="#7d9bb3"/>
<path d="M1.5 277.5 H52" stroke="#fbfbfb" stroke-width="1.6"/><path d="M1.5 280.0 H68.0" stroke="#6b7781" stroke-width="1.8"/>
<text x="59.3" y="258.5" font-size="13" text-anchor="middle" fill="#1a1a1a" font-family="Liberation Sans">2</text>
<rect x="1.5" y="280" width="50.5" height="46" fill="#e2e8f0"/><path d="M52.2 280.0 V326.0" stroke="#6b7781" stroke-width="1"/>
<path d="M52.0 280 H55.5 L68.0 291 V317 L56.5 327 H52.0 Z" fill="#7d9bb3"/>
<path d="M1.5 327.5 H52" stroke="#fbfbfb" stroke-width="1.6"/><path d="M1.5 330.0 H68.0" stroke="#6b7781" stroke-width="1.8"/>
<text x="59.3" y="308.5" font-size="13" text-anchor="middle" fill="#1a1a1a" font-family="Liberation Sans">3</text>
<rect x="1.5" y="330" width="50.5" height="46" fill="#e2e8f0"/><path d="M52.2 330.0 V376.0" stroke="#6b7781" stroke-width="1"/>
<path d="M52.0 330 H55.5 L68.0 341 V367 L56.5 377 H52.0 Z" fill="#7d9bb3"/>
<path d="M1.5 377.5 H52" stroke="#fbfbfb" stroke-width="1.6"/><path d="M1.5 380.0 H68.0" stroke="#6b7781" stroke-width="1.8"/>
<text x="59.3" y="358.5" font-size="13" text-anchor="middle" fill="#1a1a1a" font-family="Liberation Sans">4</text>
<rect x="1.5" y="380" width="50.5" height="46" fill="#e2e8f0"/><path d="M52.2 380.0 V426.0" stroke="#6b7781" stroke-width="1"/>
<path d="M52.0 380 H55.5 L68.0 391 V417 L56.5 427 H52.0 Z" fill="#7d9bb3"/>
<path d="M1.5 427.5 H52" stroke="#fbfbfb" stroke-width="1.6"/><path d="M1.5 430.0 H68.0" stroke="#6b7781" stroke-width="1.8"/>
<text x="59.3" y="408.5" font-size="13" text-anchor="middle" fill="#1a1a1a" font-family="Liberation Sans">5</text>
<rect x="1.5" y="430" width="50.5" height="46" fill="#e2e8f0"/><path d="M52.2 430.0 V476.0" stroke="#6b7781" stroke-width="1"/>
<path d="M52.0 430 H55.5 L68.0 441 V467 L56.5 477 H52.0 Z" fill="#7d9bb3"/>
<path d="M1.5 477.5 H52" stroke="#fbfbfb" stroke-width="1.6"/><path d="M1.5 480.0 H68.0" stroke="#6b7781" stroke-width="1.8"/>
<text x="59.3" y="458.5" font-size="13" text-anchor="middle" fill="#1a1a1a" font-family="Liberation Sans">6</text>
<rect x="1.5" y="480.5" width="66.5" height="24" fill="#e2e8f0"/>
<path d="M43.0 480.5 V504.5" stroke="#6b7781" stroke-width="1.3"/>
<path d="M6.5 483.0 L21.7 498.0 L37.4 483.0 Z" fill="#7d9bb3"/>
<path d="M45.5 483.0 L54.9 492.7 L64.2 483.0 Z" fill="#7d9bb3"/>
<path d="M45.5 497.5 H64.2" stroke="#6b7781" stroke-width="1.6"/>
<rect x="1" y="154" width="67.5" height="352.5" fill="none" stroke="#6b7781" stroke-width="2"/>
<path d="M1.5 179 H68" stroke="#6b7781" stroke-width="1.5"/>
<path d="M1.5 480 H68" stroke="#6b7781" stroke-width="1.5"/>
<rect x="0" y="506" width="69" height="11" fill="#f0eeee"/><rect x="0" y="516" width="69" height="646" fill="#eeeeee"/>
<rect x="1.5" y="576" width="66.5" height="24" fill="#e2e8f0"/>
<path d="M43.0 576 V600" stroke="#6b7781" stroke-width="1.3"/>
<path d="M6.5 596.5 L21.7 582 L37.4 596.5 Z" fill="#7d9bb3"/>
<path d="M45.5 583.7 H64.2" stroke="#6b7781" stroke-width="1.6"/>
<path d="M45.5 596.5 L54.9 588 L64.2 596.5 Z" fill="#7d9bb3"/>
<rect x="1.5" y="601.5" width="50.5" height="46" fill="#f0e800"/><path d="M52.2 601.5 V647.5" stroke="#6b7781" stroke-width="1"/>
<path d="M52.0 601.5 H55.5 L68.0 612.5 V638.5 L56.5 648.5 H52.0 Z" fill="#7d9bb3"/>
<path d="M1.5 649.0 H52" stroke="#fbfbfb" stroke-width="1.6"/><path d="M1.5 651.5 H68.0" stroke="#6b7781" stroke-width="1.8"/>
<text x="59.3" y="630.0" font-size="13" text-anchor="middle" fill="#1a1a1a" font-family="Liberation Sans">1</text>
<rect x="1.5" y="651.5" width="50.5" height="46" fill="#e2e8f0"/><path d="M52.2 651.5 V697.5" stroke="#6b7781" stroke-width="1"/>
<path d="M52.0 651.5 H55.5 L68.0 662.5 V688.5 L56.5 698.5 H52.0 Z" fill="#7d9bb3"/>
<path d="M1.5 699.0 H52" stroke="#fbfbfb" stroke-width="1.6"/><path d="M1.5 701.5 H68.0" stroke="#6b7781" stroke-width="1.8"/>
<text x="59.3" y="680.0" font-size="13" text-anchor="middle" fill="#1a1a1a" font-family="Liberation Sans">2</text>
<rect x="1.5" y="701.5" width="50.5" height="46" fill="#e2e8f0"/><path d="M52.2 701.5 V747.5" stroke="#6b7781" stroke-width="1"/>
<path d="M52.0 701.5 H55.5 L68.0 712.5 V738.5 L56.5 748.5 H52.0 Z" fill="#7d9bb3"/>
<path d="M1.5 749.0 H52" stroke="#fbfbfb" stroke-width="1.6"/><path d="M1.5 751.5 H68.0" stroke="#6b7781" stroke-width="1.8"/>
<text x="59.3" y="730.0" font-size="13" text-anchor="middle" fill="#1a1a1a" font-family="Liberation Sans">3</text>
<rect x="1.5" y="751.5" width="50.5" height="46" fill="#e2e8f0"/><path d="M52.2 751.5 V797.5" stroke="#6b7781" stroke-width="1"/>
<path d="M52.0 751.5 H55.5 L68.0 762.5 V788.5 L56.5 798.5 H52.0 Z" fill="#7d9bb3"/>
<path d="M1.5 799.0 H52" stroke="#fbfbfb" stroke-width="1.6"/><path d="M1.5 801.5 H68.0" stroke="#6b7781" stroke-width="1.8"/>
<text x="59.3" y="780.0" font-size="13" text-anchor="middle" fill="#1a1a1a" font-family="Liberation Sans">4</text>
<rect x="1.5" y="801.5" width="50.5" height="46" fill="#e2e8f0"/><path d="M52.2 801.5 V847.5" stroke="#6b7781" stroke-width="1"/>
<path d="M52.0 801.5 H55.5 L68.0 812.5 V838.5 L56.5 848.5 H52.0 Z" fill="#7d9bb3"/>
<path d="M1.5 849.0 H52" stroke="#fbfbfb" stroke-width="1.6"/><path d="M1.5 851.5 H68.0" stroke="#6b7781" stroke-width="1.8"/>
<text x="59.3" y="830.0" font-size="13" text-anchor="middle" fill="#1a1a1a" font-family="Liberation Sans">5</text>
<rect x="1.5" y="851.5" width="50.5" height="46" fill="#e2e8f0"/><path d="M52.2 851.5 V897.5" stroke="#6b7781" stroke-width="1"/>
<path d="M52.0 851.5 H55.5 L68.0 862.5 V888.5 L56.5 898.5 H52.0 Z" fill="#7d9bb3"/>
<path d="M1.5 899.0 H52" stroke="#fbfbfb" stroke-width="1.6"/><path d="M1.5 901.5 H68.0" stroke="#6b7781" stroke-width="1.8"/>
<text x="59.3" y="880.0" font-size="13" text-anchor="middle" fill="#1a1a1a" font-family="Liberation Sans">6</text>
<rect x="1.5" y="901.5" width="50.5" height="46" fill="#e2e8f0"/><path d="M52.2 901.5 V947.5" stroke="#6b7781" stroke-width="1"/>
<path d="M52.0 901.5 H55.5 L68.0 912.5 V938.5 L56.5 948.5 H52.0 Z" fill="#7d9bb3"/>
<path d="M1.5 949.0 H52" stroke="#fbfbfb" stroke-width="1.6"/><path d="M1.5 951.5 H68.0" stroke="#6b7781" stroke-width="1.8"/>
<text x="59.3" y="930.0" font-size="13" text-anchor="middle" fill="#1a1a1a" font-family="Liberation Sans">7</text>
<rect x="1.5" y="951.5" width="50.5" height="46" fill="#e2e8f0"/><path d="M52.2 951.5 V997.5" stroke="#6b7781" stroke-width="1"/>
<path d="M52.0 951.5 H55.5 L68.0 962.5 V988.5 L56.5 998.5 H52.0 Z" fill="#7d9bb3"/>
<path d="M1.5 999.0 H52" stroke="#fbfbfb" stroke-width="1.6"/><path d="M1.5 1001.5 H68.0" stroke="#6b7781" stroke-width="1.8"/>
<text x="59.3" y="980.0" font-size="13" text-anchor="middle" fill="#1a1a1a" font-family="Liberation Sans">8</text>
<rect x="1.5" y="1001.5" width="50.5" height="46" fill="#e2e8f0"/><path d="M52.2 1001.5 V1047.5" stroke="#6b7781" stroke-width="1"/>
<path d="M52.0 1001.5 H55.5 L68.0 1012.5 V1038.5 L56.5 1048.5 H52.0 Z" fill="#7d9bb3"/>
<path d="M1.5 1049.0 H52" stroke="#fbfbfb" stroke-width="1.6"/><path d="M1.5 1051.5 H68.0" stroke="#6b7781" stroke-width="1.8"/>
<text x="59.3" y="1030.0" font-size="13" text-anchor="middle" fill="#1a1a1a" font-family="Liberation Sans">9</text>
<rect x="1.5" y="1051.5" width="50.5" height="46" fill="#e2e8f0"/><path d="M52.2 1051.5 V1097.5" stroke="#6b7781" stroke-width="1"/>
<path d="M52.0 1051.5 H55.5 L68.0 1062.5 V1088.5 L56.5 1098.5 H52.0 Z" fill="#7d9bb3"/>
<path d="M1.5 1099.0 H52" stroke="#fbfbfb" stroke-width="1.6"/><path d="M1.5 1101.5 H68.0" stroke="#6b7781" stroke-width="1.8"/>
<text x="59.3" y="1074.5" font-size="13" text-anchor="middle" fill="#1a1a1a" font-family="Liberation Sans">1</text><text x="59.3" y="1086.5" font-size="13" text-anchor="middle" fill="#1a1a1a" font-family="Liberation Sans">0</text>
<rect x="1.5" y="1101" width="66.5" height="24" fill="#e2e8f0"/>
<path d="M43.0 1101 V1125" stroke="#6b7781" stroke-width="1.3"/>
<path d="M6.5 1103.5 L21.7 1118.5 L37.4 1103.5 Z" fill="#7d9bb3"/>
<path d="M45.5 1103.5 L54.9 1113.2 L64.2 1103.5 Z" fill="#7d9bb3"/>
<path d="M45.5 1118 H64.2" stroke="#6b7781" stroke-width="1.6"/>
<rect x="1" y="516.5" width="67.5" height="645" fill="none" stroke="#6b7781" stroke-width="2"/>
<path d="M1.5 575.5 H68" stroke="#6b7781" stroke-width="1.3"/>
<path d="M1.5 600.5 H68" stroke="#6b7781" stroke-width="1.5"/>
<path d="M1.5 1100.5 H68 M1.5 1125.5 H68" stroke="#6b7781" stroke-width="1.5"/>
<rect x="6.5" y="522.5" width="56.5" height="43" rx="3" fill="#fff" stroke="#d8d8d8" stroke-width="1"/>
<rect x="8" y="525" width="53" height="38" fill="#bccbdd"/>
<text x="33" y="550" font-size="16" text-anchor="middle" fill="#1a1a1a" font-family="Liberation Sans">Clear</text>
<text x="2" y="618" font-size="14" fill="#1a1a1a" font-family="Liberation Sans">T</text>
<rect x="12.5" y="605" width="28" height="12" fill="#fff" stroke="#555" stroke-width="1"/>
<text x="26.5" y="616" font-size="13" text-anchor="middle" fill="#111" font-family="Liberation Sans">1</text>
<g fill="none" stroke-width="1.8"><path d="M27 623 L22 627 M27 623 L32 627" stroke="#f6b84a"/><path d="M28 630 V636 H35" stroke="#f6b84a"/><path d="M36 630 L39 633 L36 636" stroke="#f6b84a"/><path d="M20 630 L17 633 L20 636" stroke="#444"/><path d="M24 637 L27 640 L30 637" stroke="#444"/></g>
<path d="M10.5 205.5 L24 193 Q26 191.5 28 191.5 L40.5 193.5 L27.5 207.5 Q26 208.5 24 208.5 Z" fill="#d89a30" stroke="#1a1a1a" stroke-width="2.2" stroke-linejoin="round"/>
<path d="M14 204.5 L25 195 L37.5 196 L27 205.5 Z" fill="#c47a20" stroke="#f8e040" stroke-width="1.2"/>
<circle cx="25.8" cy="200" r="2.8" fill="#eee" stroke="#888" stroke-width="0.8"/>
<text x="25.5" y="226" font-size="13" text-anchor="middle" fill="#111" font-family="Liberation Sans">0.80</text>
<rect x="1851" y="195" width="69" height="950" fill="#f1f1f2"/><rect x="1851" y="1145" width="69" height="15" fill="#e4e9f0"/>
<rect x="1851" y="196" width="68" height="23" fill="#e2e8f0"/>
<path d="M1876.5 196 V219" stroke="#6b7781" stroke-width="1.3"/>
<path d="M1854 203.2 H1873" stroke="#6b7781" stroke-width="1.6"/>
<path d="M1854 215.5 L1863.5 207.5 L1873 215.5 Z" fill="#7d9bb3"/>
<path d="M1881 215.5 L1897 202 L1913 215.5 Z" fill="#7d9bb3"/>
<rect x="1867.5" y="222.0" width="51" height="45.5" fill="#f0e800" stroke="#6b7781" stroke-width="1.5"/>
<path d="M1867.5 221.5 H1866 L1851.5 235.0 V254.0 L1866 268.5 H1867.5 Z" fill="#7d9bb3"/>
<path d="M1851 220.0 H1919" stroke="#6b7781" stroke-width="1.8"/>
<text x="1862.5" y="250.0" font-size="13" text-anchor="middle" fill="#1a1a1a" font-family="Liberation Sans">1</text>
<rect x="1867.5" y="272.0" width="51" height="45.5" fill="#e2e8f0" stroke="#6b7781" stroke-width="1.5"/>
<path d="M1867.5 271.5 H1866 L1851.5 285.0 V304.0 L1866 318.5 H1867.5 Z" fill="#7d9bb3"/>
<path d="M1851 270.0 H1919" stroke="#6b7781" stroke-width="1.8"/>
<text x="1862.5" y="300.0" font-size="13" text-anchor="middle" fill="#1a1a1a" font-family="Liberation Sans">2</text>
<rect x="1867.5" y="322.0" width="51" height="45.5" fill="#e2e8f0" stroke="#6b7781" stroke-width="1.5"/>
<path d="M1867.5 321.5 H1866 L1851.5 335.0 V354.0 L1866 368.5 H1867.5 Z" fill="#7d9bb3"/>
<path d="M1851 320.0 H1919" stroke="#6b7781" stroke-width="1.8"/>
<text x="1862.5" y="350.0" font-size="13" text-anchor="middle" fill="#1a1a1a" font-family="Liberation Sans">3</text>
<rect x="1867.5" y="372.0" width="51" height="45.5" fill="#e2e8f0" stroke="#6b7781" stroke-width="1.5"/>
<path d="M1867.5 371.5 H1866 L1851.5 385.0 V404.0 L1866 418.5 H1867.5 Z" fill="#7d9bb3"/>
<path d="M1851 370.0 H1919" stroke="#6b7781" stroke-width="1.8"/>
<text x="1862.5" y="400.0" font-size="13" text-anchor="middle" fill="#1a1a1a" font-family="Liberation Sans">4</text>
<rect x="1867.5" y="422.0" width="51" height="45.5" fill="#e2e8f0" stroke="#6b7781" stroke-width="1.5"/>
<path d="M1867.5 421.5 H1866 L1851.5 435.0 V454.0 L1866 468.5 H1867.5 Z" fill="#7d9bb3"/>
<path d="M1851 420.0 H1919" stroke="#6b7781" stroke-width="1.8"/>
<text x="1862.5" y="450.0" font-size="13" text-anchor="middle" fill="#1a1a1a" font-family="Liberation Sans">5</text>
<rect x="1867.5" y="472.0" width="51" height="45.5" fill="#e2e8f0" stroke="#6b7781" stroke-width="1.5"/>
<path d="M1867.5 471.5 H1866 L1851.5 485.0 V504.0 L1866 518.5 H1867.5 Z" fill="#7d9bb3"/>
<path d="M1851 470.0 H1919" stroke="#6b7781" stroke-width="1.8"/>
<text x="1862.5" y="500.0" font-size="13" text-anchor="middle" fill="#1a1a1a" font-family="Liberation Sans">6</text>
<rect x="1867.5" y="522.0" width="51" height="45.5" fill="#e2e8f0" stroke="#6b7781" stroke-width="1.5"/>
<path d="M1867.5 521.5 H1866 L1851.5 535.0 V554.0 L1866 568.5 H1867.5 Z" fill="#7d9bb3"/>
<path d="M1851 520.0 H1919" stroke="#6b7781" stroke-width="1.8"/>
<text x="1862.5" y="550.0" font-size="13" text-anchor="middle" fill="#1a1a1a" font-family="Liberation Sans">7</text>
<rect x="1867.5" y="572.0" width="51" height="45.5" fill="#e2e8f0" stroke="#6b7781" stroke-width="1.5"/>
<path d="M1867.5 571.5 H1866 L1851.5 585.0 V604.0 L1866 618.5 H1867.5 Z" fill="#7d9bb3"/>
<path d="M1851 570.0 H1919" stroke="#6b7781" stroke-width="1.8"/>
<text x="1862.5" y="600.0" font-size="13" text-anchor="middle" fill="#1a1a1a" font-family="Liberation Sans">8</text>
<rect x="1867.5" y="622.0" width="51" height="45.5" fill="#e2e8f0" stroke="#6b7781" stroke-width="1.5"/>
<path d="M1867.5 621.5 H1866 L1851.5 635.0 V654.0 L1866 668.5 H1867.5 Z" fill="#7d9bb3"/>
<path d="M1851 620.0 H1919" stroke="#6b7781" stroke-width="1.8"/>
<text x="1862.5" y="650.0" font-size="13" text-anchor="middle" fill="#1a1a1a" font-family="Liberation Sans">9</text>
<rect x="1867.5" y="672.0" width="51" height="45.5" fill="#e2e8f0" stroke="#6b7781" stroke-width="1.5"/>
<path d="M1867.5 671.5 H1866 L1851.5 685.0 V704.0 L1866 718.5 H1867.5 Z" fill="#7d9bb3"/>
<path d="M1851 670.0 H1919" stroke="#6b7781" stroke-width="1.8"/>
<text x="1862.5" y="694.5" font-size="13" text-anchor="middle" fill="#1a1a1a" font-family="Liberation Sans">1</text><text x="1862.5" y="706.5" font-size="13" text-anchor="middle" fill="#1a1a1a" font-family="Liberation Sans">0</text>
<rect x="1867.5" y="722.0" width="51" height="45.5" fill="#e2e8f0" stroke="#6b7781" stroke-width="1.5"/>
<path d="M1867.5 721.5 H1866 L1851.5 735.0 V754.0 L1866 768.5 H1867.5 Z" fill="#7d9bb3"/>
<path d="M1851 720.0 H1919" stroke="#6b7781" stroke-width="1.8"/>
<text x="1862.5" y="744.5" font-size="13" text-anchor="middle" fill="#1a1a1a" font-family="Liberation Sans">1</text><text x="1862.5" y="756.5" font-size="13" text-anchor="middle" fill="#1a1a1a" font-family="Liberation Sans">1</text>
<rect x="1867.5" y="772.0" width="51" height="45.5" fill="#e2e8f0" stroke="#6b7781" stroke-width="1.5"/>
<path d="M1867.5 771.5 H1866 L1851.5 785.0 V804.0 L1866 818.5 H1867.5 Z" fill="#7d9bb3"/>
<path d="M1851 770.0 H1919" stroke="#6b7781" stroke-width="1.8"/>
<text x="1862.5" y="794.5" font-size="13" text-anchor="middle" fill="#1a1a1a" font-family="Liberation Sans">1</text><text x="1862.5" y="806.5" font-size="13" text-anchor="middle" fill="#1a1a1a" font-family="Liberation Sans">2</text>
<rect x="1867.5" y="822.0" width="51" height="45.5" fill="#e2e8f0" stroke="#6b7781" stroke-width="1.5"/>
<path d="M1867.5 821.5 H1866 L1851.5 835.0 V854.0 L1866 868.5 H1867.5 Z" fill="#7d9bb3"/>
<path d="M1851 820.0 H1919" stroke="#6b7781" stroke-width="1.8"/>
<text x="1862.5" y="844.5" font-size="13" text-anchor="middle" fill="#1a1a1a" font-family="Liberation Sans">1</text><text x="1862.5" y="856.5" font-size="13" text-anchor="middle" fill="#1a1a1a" font-family="Liberation Sans">3</text>
<rect x="1867.5" y="872.0" width="51" height="45.5" fill="#e2e8f0" stroke="#6b7781" stroke-width="1.5"/>
<path d="M1867.5 871.5 H1866 L1851.5 885.0 V904.0 L1866 918.5 H1867.5 Z" fill="#7d9bb3"/>
<path d="M1851 870.0 H1919" stroke="#6b7781" stroke-width="1.8"/>
<text x="1862.5" y="894.5" font-size="13" text-anchor="middle" fill="#1a1a1a" font-family="Liberation Sans">1</text><text x="1862.5" y="906.5" font-size="13" text-anchor="middle" fill="#1a1a1a" font-family="Liberation Sans">4</text>
<rect x="1867.5" y="922.0" width="51" height="45.5" fill="#e2e8f0" stroke="#6b7781" stroke-width="1.5"/>
<path d="M1867.5 921.5 H1866 L1851.5 935.0 V954.0 L1866 968.5 H1867.5 Z" fill="#7d9bb3"/>
<path d="M1851 920.0 H1919" stroke="#6b7781" stroke-width="1.8"/>
<text x="1862.5" y="944.5" font-size="13" text-anchor="middle" fill="#1a1a1a" font-family="Liberation Sans">1</text><text x="1862.5" y="956.5" font-size="13" text-anchor="middle" fill="#1a1a1a" font-family="Liberation Sans">5</text>
<rect x="1867.5" y="972.0" width="51" height="45.5" fill="#e2e8f0" stroke="#6b7781" stroke-width="1.5"/>
<path d="M1867.5 971.5 H1866 L1851.5 985.0 V1004.0 L1866 1018.5 H1867.5 Z" fill="#7d9bb3"/>
<path d="M1851 970.0 H1919" stroke="#6b7781" stroke-width="1.8"/>
<text x="1862.5" y="994.5" font-size="13" text-anchor="middle" fill="#1a1a1a" font-family="Liberation Sans">1</text><text x="1862.5" y="1006.5" font-size="13" text-anchor="middle" fill="#1a1a1a" font-family="Liberation Sans">6</text>
<rect x="1867.5" y="1022.0" width="51" height="45.5" fill="#e2e8f0" stroke="#6b7781" stroke-width="1.5"/>
<path d="M1867.5 1021.5 H1866 L1851.5 1035.0 V1054.0 L1866 1068.5 H1867.5 Z" fill="#7d9bb3"/>
<path d="M1851 1020.0 H1919" stroke="#6b7781" stroke-width="1.8"/>
<text x="1862.5" y="1044.5" font-size="13" text-anchor="middle" fill="#1a1a1a" font-family="Liberation Sans">1</text><text x="1862.5" y="1056.5" font-size="13" text-anchor="middle" fill="#1a1a1a" font-family="Liberation Sans">7</text>
<rect x="1867.5" y="1072.0" width="51" height="45.5" fill="#e2e8f0" stroke="#6b7781" stroke-width="1.5"/>
<path d="M1867.5 1071.5 H1866 L1851.5 1085.0 V1104.0 L1866 1118.5 H1867.5 Z" fill="#7d9bb3"/>
<path d="M1851 1070.0 H1919" stroke="#6b7781" stroke-width="1.8"/>
<text x="1862.5" y="1094.5" font-size="13" text-anchor="middle" fill="#1a1a1a" font-family="Liberation Sans">1</text><text x="1862.5" y="1106.5" font-size="13" text-anchor="middle" fill="#1a1a1a" font-family="Liberation Sans">8</text>
<rect x="1851" y="1120" width="68" height="25" fill="#e2e8f0"/>
<path d="M1876.5 1120 V1145" stroke="#6b7781" stroke-width="1.3"/>
<path d="M1854 1123 L1863.5 1131 L1873 1123 Z" fill="#7d9bb3"/>
<path d="M1854 1137.5 H1873" stroke="#6b7781" stroke-width="1.6"/>
<path d="M1881 1123 L1897 1138 L1913 1123 Z" fill="#7d9bb3"/>
<path d="M1851.5 195 V1145.5 H1920 M1851 195.5 H1920" fill="none" stroke="#6b7781" stroke-width="1.5"/>
<path d="M1851 219.5 H1920 M1851 1119.5 H1920" stroke="#6b7781" stroke-width="1.5"/>
<rect x="1886" y="224" width="25.5" height="13.5" fill="#fff" stroke="#555" stroke-width="1"/>
<text x="1898.5" y="236" font-size="14" text-anchor="middle" fill="#111" font-family="Liberation Sans">T 1</text>
<g fill="none" stroke-width="1.8"><path d="M1897 243 L1892 247 M1897 243 L1902 247" stroke="#f6b84a"/><path d="M1898 250 V256 H1905" stroke="#f6b84a"/><path d="M1906 250 L1909 253 L1906 256" stroke="#f6b84a"/><path d="M1890 250 L1887 253 L1890 256" stroke="#444"/><path d="M1894 257 L1897 260 L1900 257" stroke="#444"/></g>
<rect x="1851" y="153" width="64" height="42" fill="#f2f0f0"/>
<path d="M1854 177 H1858 M1860 174 L1862 177 L1860 180 M1863 175 V179" stroke="#8a9ab0" stroke-width="1.5" fill="none"/>
<path d="M1867 174.5 H1874 L1870.5 178.5 Z M1894 174.5 H1901 L1897.5 178.5 Z" fill="#111"/>
<path d="M1884.5 171 V189" stroke="#8a9ab0" stroke-width="2.5" stroke-dasharray="3 1.5"/>
<rect x="72" y="519" width="71.5" height="71.5" rx="4" fill="#fff" stroke="#e6e6e6" stroke-width="1"/>
<rect x="72" y="594.5" width="71.5" height="71.5" rx="4" fill="#fff" stroke="#e6e6e6" stroke-width="1"/>
<circle cx="106.7" cy="544.5" r="21" fill="#8fd08f"/>
<path d="M96 546 L104 555 L117 535" fill="none" stroke="#fff" stroke-width="4.5"/>
<text x="106.5" y="583" font-size="17" text-anchor="middle" fill="#7a7a7a" font-family="Liberation Sans">Do It</text>
<circle cx="106.7" cy="620.5" r="21" fill="#8fd08f"/>
<path d="M114.6 609 A13 13 0 1 0 113.5 633" fill="none" stroke="#fff" stroke-width="4.5"/>
<path d="M111 619 L125 612 L123.5 627 Z" fill="#fff"/>
<text x="106.5" y="659" font-size="17" text-anchor="middle" fill="#7a7a7a" font-family="Liberation Sans">Redo</text>
<rect x="150" y="517" width="31" height="152" fill="#f4f4f4"/>
<rect x="150.5" y="518.5" width="29" height="30" fill="#f4f4f4" stroke="#6aa0e0" stroke-width="1"/>
<g transform="translate(0 0)" stroke="#a0a0a0" stroke-width="0.9" stroke-linejoin="round"><path d="M153 546 V528 H163 V536 H175 V546 Z" fill="#f8d98a"/><path d="M153 528 L157 523 H167 L163 528 Z M163 536 L167 531 H179 L175 536 Z" fill="#e6e6e6"/><path d="M163 528 L167 523 V531 L163 536 Z M175 536 L179 531 V541 L175 546 Z" fill="#e8c070"/></g><g transform="translate(0 32)" stroke="#d8d8d8" stroke-width="0.9" stroke-linejoin="round"><path d="M153 546 V528 H163 V536 H175 V546 Z" fill="#dedede"/><path d="M153 528 L157 523 H167 L163 528 Z M163 536 L167 531 H179 L175 536 Z" fill="#ececec"/><path d="M163 528 L167 523 V531 L163 536 Z M175 536 L179 531 V541 L175 546 Z" fill="#d0d0d0"/></g><g transform="translate(0 66)" stroke="#9a9a9a" stroke-width="0.9" stroke-linejoin="round"><path d="M153 546 V528 H163 V536 H175 V546 Z" fill="#9ab4dc"/><path d="M153 528 L157 523 H167 L163 528 Z M163 536 L167 531 H179 L175 536 Z" fill="#dfe6ee"/><path d="M163 528 L167 523 V531 L163 536 Z M175 536 L179 531 V541 L175 546 Z" fill="#7f9cc8"/></g>
<path d="M162.5 628 L169.5 635.5 L162.5 643 Z" fill="#c8c8c8"/>
</svg>

<div class="a" style="left:513px;top:162px;width:363px;height:38px;background:#f1f2f4;border:1px solid #e6e6e6;border-radius:4px"></div>
<div class="a" style="left:921px;top:162px;width:372px;height:38px;background:#f1f2f4;border:1px solid #e6e6e6;border-radius:4px"></div>
<div class="a" style="left:1338px;top:162px;width:71px;height:38px;background:#f1f2f4;border:1px solid #e6e6e6;border-radius:4px"></div>
<svg class="a" style="left:0;top:150px" width="1920" height="60" viewBox="0 150 1920 60">
<g fill="#dceefb" stroke="#8a8a8a" stroke-width="2">
<rect x="517" y="169" width="29.5" height="27"/><rect x="593.5" y="169" width="29.5" height="27"/><rect x="625.5" y="169" width="29.5" height="27"/><rect x="796.5" y="169" width="29" height="27"/>
</g>
<g fill="#dceefb" stroke="#9fc8e8" stroke-width="1" stroke-dasharray="1.5 1">
<rect x="549" y="169" width="26.5" height="27"/><rect x="970.5" y="169" width="26" height="27"/><rect x="1015.5" y="169" width="26" height="27"/>
</g>
<circle cx="527" cy="179" r="7.5" fill="none" stroke="#aaa" stroke-width="1.3"/><circle cx="537" cy="187" r="7.5" fill="none" stroke="#aaa" stroke-width="1.3"/>
<path d="M552 175 H563 M552 172 V178 M563 172 V178 M572 180 V193 M569 180 H575 M569 193 H575" stroke="#555" stroke-width="1.3"/>
<rect x="553" y="181" width="14" height="11" fill="#eef4fb" stroke="#aaa" stroke-width="1"/>
<path d="M597 181 L603 175 H619 V188 L613 193 H597 Z" fill="#fff" stroke="#888" stroke-width="1.2"/><path d="M607 169 V196" stroke="#3bb03b" stroke-width="1.2"/>
<path d="M629 175 L634 171 H651 V189 L646 193 H629 Z" fill="#f6f6f6" stroke="#888" stroke-width="1.2"/><path d="M646 175 L651 171 V189 L646 193 Z" fill="#9a9a9a"/>
<path d="M662 176 L666 172 H681 V188 L677 192 H662 Z" fill="#f4f4f4" stroke="#ddd" stroke-width="1"/><path d="M677 176 L681 172 V188 L677 192 Z" fill="#ccc"/>
<path d="M705 188 L709 180 H726 L721 188 Z" fill="#fff" stroke="#555" stroke-width="1.5"/><path d="M705 188 V193 H721 V188 M721 193 L726 186 V180" fill="none" stroke="#555" stroke-width="1.3"/><path d="M708 178 H726 L724 175 H711 Z" fill="#9cc0e0"/>
<path d="M737 177 Q740 171 748 171 H760 V184 L752 185 V196 H740 Q737 196 737 192 Z" fill="#7aa0d0"/><path d="M748 171 H756 Q760 172 760 180 V184 H750 V176 Z" fill="#e07070"/>
<path d="M783 172 V186 H791 M783 186 L772 190" stroke="#ddd" stroke-width="1.2" fill="none"/><circle cx="779" cy="186" r="6" fill="none" stroke="#e6e6e6"/>
<path d="M800 178 L804 174 H818 V190 L814 194 H800 Z M800 178 H814 V194 M814 178 L818 174" fill="none" stroke="#888" stroke-width="1.2"/><path d="M818 171 V183 M812 177 H824" stroke="#e03030" stroke-width="2"/>
<rect x="829.5" y="171" width="23" height="22.5" fill="none" stroke="#777" stroke-width="1.6"/>
<path d="M929 175 L933 172 H950 V189 L946 193 H929 Z" fill="#f5cf6e" stroke="#999" stroke-width="1"/><path d="M946 176 L950 172 V189 L946 193 Z M929 176 L933 172 H950 L946 176 Z" fill="#aaa"/>
<path d="M973 176 L977 172 H994 V189 L990 193 H973 Z" fill="none" stroke="#f0c860" stroke-width="2.5"/>
<path d="M1020 176 L1024 172 H1037 V190 L1033 193 H1020 Z" fill="#fff" stroke="#999" stroke-width="1.5"/><path d="M1018 186 H1033 L1040 180" fill="none" stroke="#4cb84c" stroke-width="1.8"/>
<path d="M1064 175 L1068 172 H1085 V189 L1081 193 H1064 Z" fill="#bbb" stroke="#999" stroke-width="1"/><rect x="1065" y="176" width="15" height="16" fill="#f5cf6e" stroke="#5cbf5c" stroke-width="2"/>
<g fill="#f6f6f6" stroke="#e06060" stroke-width="1.5"><path d="M1095 176 L1099 172 H1117 L1113 176 Z"/><path d="M1095 182 H1113 L1117 178 M1095 187 H1113 L1117 183 M1095 192 H1113 L1117 188"/></g>
<rect x="1125" y="172" width="10" height="20" fill="#e3b473" stroke="#777" stroke-width="1"/><rect x="1139" y="172" width="10" height="20" fill="#fff" stroke="#777" stroke-width="1"/>
<path d="M1171 178 L1177 172 H1193 V187 L1187 193 H1171 Z" fill="#e9d0a0" stroke="#e0b870" stroke-width="1"/><circle cx="1182" cy="183" r="6" fill="none" stroke="#d8c0a0" stroke-width="1.5"/>
<circle cx="1212" cy="183" r="11" fill="#f5d26a" stroke="#bbb" stroke-width="1"/><path d="M1212 183 V172 A11 11 0 0 0 1201 183 Z" fill="#c8d2dc"/><path d="M1212 183 H1201 A11 11 0 0 0 1212 194 Z" fill="#8aaed8"/><path d="M1212 183 V194 A11 11 0 0 0 1223 183 Z" fill="#e87878"/>
<rect x="1257" y="171" width="14" height="12" fill="#fff" stroke="#9ab" stroke-width="1"/><rect x="1257" y="171" width="14" height="2.5" fill="#8ab4e0"/>
<rect x="1247" y="180" width="14" height="13" fill="#fff" stroke="#9ab" stroke-width="1"/><rect x="1247" y="180" width="14" height="2.5" fill="#8ab4e0"/>
<path d="M1346 177 V171.5 H1351 M1363.5 171.5 H1368.5 V177 M1346 189 V194.5 H1351 M1363.5 194.5 H1368.5 V189" fill="none" stroke="#666" stroke-width="1.6"/>
<circle cx="1359" cy="180.5" r="5.5" fill="#fff" stroke="#bbb" stroke-width="1.5"/><path d="M1355 184.5 L1349 190.5" stroke="#bbb" stroke-width="2"/>
<circle cx="1389" cy="183" r="11.7" fill="#9cb8dd"/>
<text x="1389" y="190" font-family="Liberation Sans" font-weight="bold" font-size="17" fill="#fff" text-anchor="middle">?</text>
<g fill="#777">
<path d="M580.5 181 H590.5 L585.5 186 Z"/><path d="M688.5 181 H698.5 L693.5 186 Z"/><path d="M858.5 181 H868.5 L863.5 186 Z"/>
<path d="M956.5 181 H966.5 L961.5 186 Z"/><path d="M1001.5 181 H1011.5 L1006.5 186 Z"/><path d="M1046.5 181 H1056.5 L1051.5 186 Z"/>
<path d="M1154.5 181 H1164.5 L1159.5 186 Z"/><path d="M1230.5 181 H1240.5 L1235.5 186 Z"/><path d="M1276.5 181 H1286.5 L1281.5 186 Z"/>
</g>
</svg>
<div class="a" style="left:1001px;top:34px;width:1px;height:166px;background:rgba(255,255,255,0.85)"></div>
<div id="status" class="a"></div>
<svg class="a" style="left:0;top:1160px" width="1920" height="40" viewBox="0 1160 1920 40">
<path d="M999.6 202 L993.7 1200" stroke="#1d3b78" stroke-width="2.6"/>
<circle cx="1269.5" cy="1181.5" r="10" fill="#fff" stroke="#c83030" stroke-width="3"/>
<circle cx="1269.5" cy="1181.5" r="12" fill="none" stroke="#e8a0a0" stroke-width="1"/>
<path d="M1262 1188 L1277 1175" stroke="#d83030" stroke-width="3.5"/>
<rect x="1291" y="1185.5" width="342.5" height="9.5" fill="#dce6ea" stroke="#6f8087" stroke-width="2"/>
<path d="M1640 1181 H1648 M1648 1176 V1186 L1656 1182 L1660 1182 M1656 1178 V1186" stroke="#111" stroke-width="2.2" fill="none"/>
<path d="M1648 1176 L1655 1179 V1185 L1648 1187 Z" fill="#111"/>
<rect x="1670" y="1175" width="20" height="22" rx="2" fill="#2f8ad8" stroke="#1a5aa0" stroke-width="1"/>
<rect x="1668" y="1171" width="24" height="4" rx="1" fill="#3a9ae8" stroke="#1a5aa0" stroke-width="1"/>
<path d="M1675 1178 V1194 M1680 1178 V1194 M1685 1178 V1194" stroke="#9cd0f8" stroke-width="1.3"/>
<rect x="1700.5" y="1168" width="49.5" height="27.5" fill="#f2f1f1" stroke="#d0d0d0" stroke-width="1"/>
<rect x="1755" y="1168" width="72.5" height="27.5" fill="#f2f1f1" stroke="#d0d0d0" stroke-width="1"/>
<rect x="1833" y="1168" width="72.5" height="27.5" fill="#f2f1f1" stroke="#d0d0d0" stroke-width="1"/>
<text x="1725" y="1187" font-family="Liberation Mono" font-size="14" fill="#111" text-anchor="middle">CS1</text>
<rect x="1762.5" y="1173.5" width="18" height="16" fill="#f0d000" stroke="#333" stroke-width="1.2"/>
<rect x="1766" y="1177" width="11" height="9" fill="#f6f6f6" stroke="#333" stroke-width="1"/>
<text x="1800" y="1187" font-family="Liberation Mono" font-size="14" fill="#111" text-anchor="middle">WG1</text>
<text x="1873" y="1186" font-family="Liberation Serif" font-size="13" fill="#111" text-anchor="middle">mm</text>
<rect x="618" y="1199" width="1302" height="1" fill="#9a9a9a"/>
</svg>

</body></html>
